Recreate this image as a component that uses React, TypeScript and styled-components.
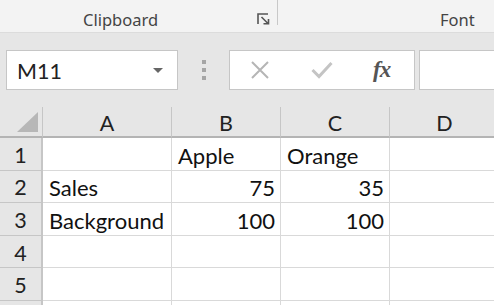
import React from "react";
import styled, { createGlobalStyle } from "styled-components";

const Global = createGlobalStyle`
  html, body { margin: 0; padding: 0; background: #ffffff; overflow: hidden; }
  body { font-family: "Lato", "Noto Sans", sans-serif; }
`;

const Page = styled.div`
  width: 494px;
  height: 305px;
  display: flex;
  flex-direction: column;
  overflow: hidden;
`;

const Ribbon = styled.div`
  height: 32px;
  background: #f3f3f3;
  border-bottom: 1px solid #dcdcdc;
  display: flex;
  align-items: flex-start;
  flex-shrink: 0;
`;

const RibbonGroup = styled.div<{ $w: number; $sep?: boolean }>`
  width: ${(p) => p.$w}px;
  height: ${(p) => (p.$sep ? 25 : 32)}px;
  flex-shrink: 0;
  display: flex;
  align-items: flex-start;
  position: relative;
  font-family: "Noto Sans", "Open Sans", sans-serif;
  font-size: 16.5px;
  line-height: 20px;
  color: #444444;
  ${(p) => (p.$sep ? "border-right: 1px solid #c8c8c8;" : "")}
`;

const GroupLabel = styled.span<{ $pl: number }>`
  padding-left: ${(p) => p.$pl}px;
  padding-top: 10px;
`;

const Launcher = styled.svg`
  position: absolute;
  right: 6px;
  top: 12px;
`;

const FormulaArea = styled.div`
  background: #e6e6e6;
  padding: 17px 0 17px 6px;
  display: flex;
  align-items: center;
  flex-shrink: 0;
`;

const NameBox = styled.div`
  box-sizing: border-box;
  width: 172px;
  height: 40px;
  background: #ffffff;
  border: 1px solid #c6c6c6;
  display: flex;
  align-items: center;
  justify-content: space-between;
  padding: 1px 14px 0 10px;
  font-size: 21.5px;
  color: #222;
`;

const Dots = styled.div`
  width: 51px;
  display: flex;
  flex-direction: column;
  align-items: center;
  gap: 4px;
  & > i {
    width: 4px;
    height: 4px;
    background: #a5a5a5;
    display: block;
  }
`;

const FxBox = styled.div`
  width: 186px;
  height: 40px;
  box-sizing: border-box;
  background: #ffffff;
  border: 1px solid #c6c6c6;
  display: flex;
  align-items: center;
  padding-left: 20px;
`;

const FxBtn = styled.div<{ $w: number }>`
  width: ${(p) => p.$w}px;
  display: flex;
  align-items: center;
`;

const FxLabel = styled.span`
  font-family: "Liberation Serif", "DejaVu Serif", serif;
  font-style: italic;
  font-weight: bold;
  font-size: 23px;
  color: #555;
  letter-spacing: -1px;
  margin-left: 1px;
`;

const FormulaInput = styled.div`
  margin-left: 4px;
  flex: 1;
  height: 40px;
  box-sizing: border-box;
  background: #ffffff;
  border: 1px solid #c6c6c6;
  border-right: none;
`;

const Sheet = styled.div`
  display: grid;
  grid-template-columns: 43px 129px 109px 109px 110px;
  grid-template-rows: 31px repeat(6, 32.6px);
  background: #ffffff;
`;

const Corner = styled.div`
  background: #e6e6e6;
  border-right: 1px solid #c6c6c6;
  border-bottom: 2px solid #b4b4b4;
  display: flex;
  align-items: flex-end;
  justify-content: flex-end;
  padding: 0 4px 4px 0;
`;

const ColHead = styled.div`
  background: #e6e6e6;
  border-right: 1px solid #c6c6c6;
  border-bottom: 2px solid #b4b4b4;
  display: flex;
  align-items: center;
  justify-content: center;
  font-size: 21.5px;
  color: #222;
  padding-top: 2px;
`;

const RowHead = styled.div`
  background: #e6e6e6;
  border-right: 2px solid #c6c6c6;
  border-bottom: 1px solid #c6c6c6;
  display: flex;
  align-items: center;
  justify-content: center;
  font-size: 21.5px;
  color: #222;
  padding-top: 2px;
`;

const Cell = styled.div<{ $num?: boolean }>`
  border-right: 1px solid #d9d9d9;
  border-bottom: 1px solid #d9d9d9;
  display: flex;
  align-items: center;
  justify-content: ${(p) => (p.$num ? "flex-end" : "flex-start")};
  padding: 3px 5px 0 6px;
  font-size: 22px;
  color: #111;
  white-space: nowrap;
  overflow: hidden;
`;

const cols = ["A", "B", "C", "D"];
const rows: (string | number | null)[][] = [
  [null, "Apple", "Orange", null],
  ["Sales", 75, 35, null],
  ["Background", 100, 100, null],
  [null, null, null, null],
  [null, null, null, null],
  [null, null, null, null],
];

export default function App() {
  return (
    <Page>
      <Global />
      <Ribbon>
        <RibbonGroup $w={277} $sep>
          <GroupLabel $pl={83}>Clipboard</GroupLabel>
          <Launcher width="14" height="14" viewBox="0 0 14 14">
            <path d="M1 12 V2 H11" fill="none" stroke="#555" strokeWidth="1.6" />
            <path d="M4.5 5 L11 11.5 M11.5 7 V11.8 H6.5" fill="none" stroke="#555" strokeWidth="1.6" />
          </Launcher>
        </RibbonGroup>
        <RibbonGroup $w={217}>
          <GroupLabel $pl={162}>Font</GroupLabel>
        </RibbonGroup>
      </Ribbon>
      <FormulaArea>
        <NameBox>
          <span>M11</span>
          <svg width="10" height="6" viewBox="0 0 10 6">
            <path d="M0 0 H10 L5 5 Z" fill="#666" />
          </svg>
        </NameBox>
        <Dots>
          <i />
          <i />
          <i />
        </Dots>
        <FxBox>
          <FxBtn $w={61}>
            <svg width="20" height="20" viewBox="0 0 20 20">
              <path d="M2 2 L18 18 M18 2 L2 18" stroke="#b5b5b5" strokeWidth="2" />
            </svg>
          </FxBtn>
          <FxBtn $w={61}>
            <svg width="22" height="18" viewBox="0 0 22 18">
              <path d="M1.5 9 L8 15.5 L20.5 2" fill="none" stroke="#c4c4c4" strokeWidth="3" />
            </svg>
          </FxBtn>
          <FxBtn $w={30}>
            <FxLabel>fx</FxLabel>
          </FxBtn>
        </FxBox>
        <FormulaInput />
      </FormulaArea>
      <Sheet>
        <Corner>
          <svg width="21" height="20" viewBox="0 0 21 20">
            <path d="M21 0 V20 H0 Z" fill="#b7b7b7" />
          </svg>
        </Corner>
        {cols.map((c) => (
          <ColHead key={c}>{c}</ColHead>
        ))}
        {rows.map((r, i) => (
          <React.Fragment key={i}>
            <RowHead>{i < 5 ? i + 1 : ""}</RowHead>
            {r.map((v, j) => (
              <Cell key={j} $num={typeof v === "number"}>
                {v}
              </Cell>
            ))}
          </React.Fragment>
        ))}
      </Sheet>
    </Page>
  );
}
